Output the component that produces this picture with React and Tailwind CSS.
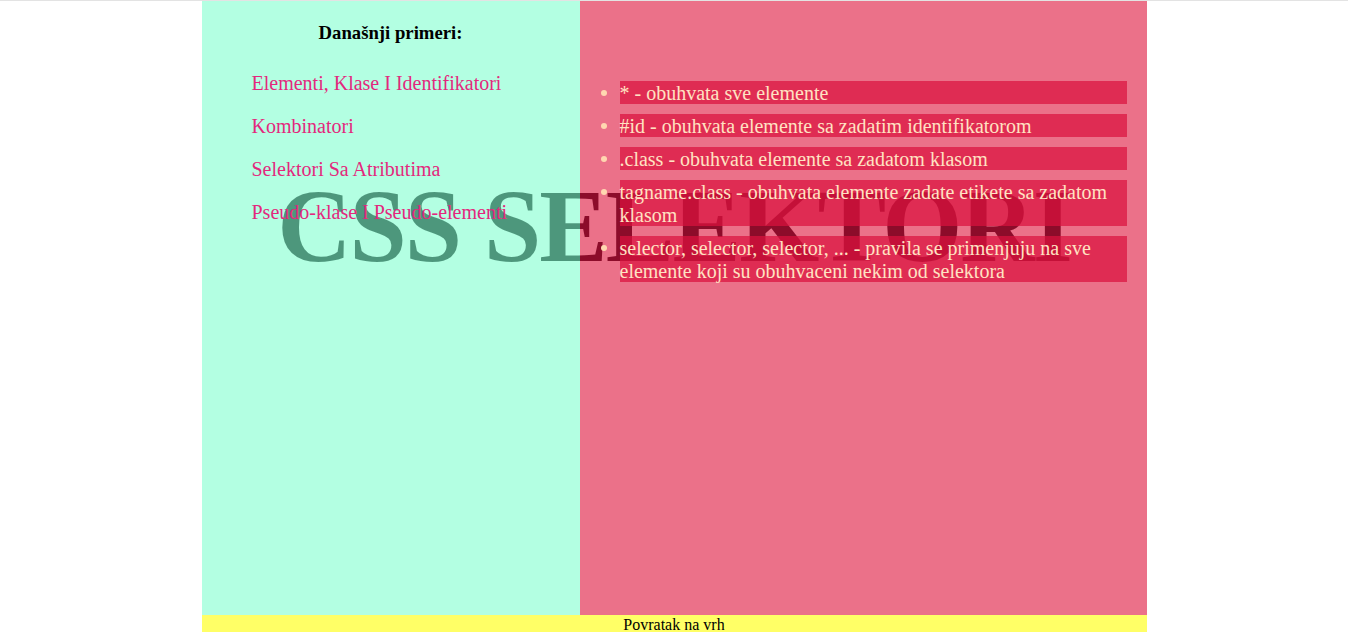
export default function App() {

  const links = [
    "Elementi, Klase I Identifikatori",
    "Kombinatori",
    "Selektori Sa Atributima",
    "Pseudo-klase I Pseudo-elementi",
  ];

  const items = [
    "* - obuhvata sve elemente",
    "#id - obuhvata elemente sa zadatim identifikatorom",
    ".class - obuhvata elemente sa zadatom klasom",
    "tagname.class - obuhvata elemente zadate etikete sa zadatom klasom",
    "selector, selector, selector, ... - pravila se primenjuju na sve elemente koji su obuhvaceni nekim od selektora",
  ];

  return (
    <div className="min-h-screen bg-white border-t border-[#e3e3e3] font-['Liberation_Serif',serif] text-black">

      <div className="relative mx-auto w-[945px]">

        <div className="flex h-[614px]">

          {/* ================= LEFT ================= */}
          <div className="w-[378px] bg-[#b3ffe2] pt-[21px]">

            <div className="relative z-10">

              <h3 className="text-center text-[18.72px] leading-[22px] font-bold">
                Današnji primeri:
              </h3>

              <div className="mt-[28px] pl-[50px] flex flex-col gap-[20px]">
                {links.map((link) => (
                  <a
                    key={link}
                    href="#"
                    className="text-[20px] leading-[23px] text-[#e3287d]"
                  >
                    {link}
                  </a>
                ))}
              </div>

            </div>

          </div>

          {/* ================= RIGHT ================= */}
          <div className="flex-1 bg-[#eb7189] pt-[80px] pl-[40px] pr-[20px]">

            <ul className="relative z-10 list-disc flex flex-col gap-[10px] marker:text-[#ffd7b0]">
              {items.map((item) => (
                <li
                  key={item}
                  className="bg-[rgba(218,18,63,0.72)] text-[20px] leading-[23px] text-[#ffe2c2]"
                >
                  <span className="relative top-[1px]">{item}</span>
                </li>
              ))}
            </ul>

          </div>

        </div>

        <h1 className="absolute inset-x-0 top-[174px] text-center text-[103px] leading-none font-bold tracking-[-2px] bg-[linear-gradient(to_right,#4d977c_378px,#8c0c2a_378px)] bg-clip-text text-transparent">
          CSS SELEKTORI
        </h1>

        <footer className="bg-[#ffff66] text-center text-[16px] leading-[20px]">
          Povratak na vrh
        </footer>

      </div>

    </div>
  );
}
